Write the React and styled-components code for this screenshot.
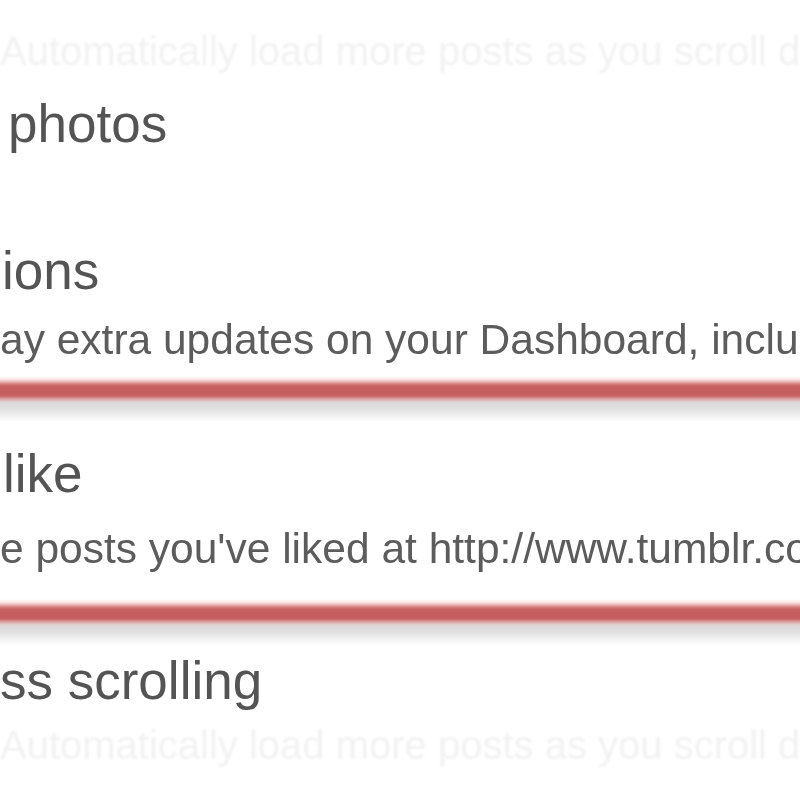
import React from "react";
import styled, { createGlobalStyle } from "styled-components";

const Global = createGlobalStyle`
  html, body { margin: 0; padding: 0; background: #ffffff; }
  body { font-family: "Liberation Sans", Arial, sans-serif; }
`;

const Page = styled.div`
  width: 800px;
  height: 800px;
  overflow: hidden;
  display: flex;
  flex-direction: column;
  background: #ffffff;
`;

const Faint = styled.div`
  margin-top: ${(p) => p.$top}px;
  font-size: 40px;
  line-height: 42px;
  color: #f2f2f2;
  white-space: nowrap;
  filter: blur(1.2px);
`;

const Title = styled.div`
  margin-top: ${(p) => p.$top}px;
  padding-left: ${(p) => p.$indent || 0}px;
  font-size: 53px;
  line-height: 54px;
  color: #545454;
  white-space: nowrap;
  filter: blur(0.6px);
`;

const Desc = styled.div`
  margin-top: ${(p) => p.$top}px;
  padding-left: ${(p) => p.$indent || 0}px;
  font-size: 42.5px;
  line-height: 42px;
  color: #5c5c5c;
  white-space: nowrap;
  filter: blur(0.6px);
`;

const Divider = styled.div`
  margin-top: ${(p) => p.$top}px;
  height: 46px;
  flex-shrink: 0;
  background: linear-gradient(
    to bottom,
    #ffffff 0px,
    #fbeaea 3px,
    #f1c6c6 5px,
    #d87f7f 8px,
    #c86262 10px,
    #c45c5c 17px,
    #c86464 20px,
    #dba6a6 23px,
    #e0d4d4 26px,
    #dcdcdc 29px,
    #e3e3e3 34px,
    #efefef 39px,
    #ffffff 46px
  );
`;

export default function App() {
  return (
    <>
      <Global />
      <Page>
        <Faint $top={30}>Automatically load more posts as you scroll down your Dashboard</Faint>
        <Title $top={25} $indent={8}>photos</Title>
        <Title $top={93} $indent={2}>ions</Title>
        <Desc $top={21}>ay extra updates on your Dashboard, including</Desc>
        <Divider $top={15} />
        <Title $top={25} $indent={3}>like</Title>
        <Desc $top={27}>e posts you've liked at http://www.tumblr.com/liked/by</Desc>
        <Divider $top={29} />
        <Title $top={9}>ss scrolling</Title>
        <Faint $top={16}>Automatically load more posts as you scroll down your Dashboard</Faint>
      </Page>
    </>
  );
}
